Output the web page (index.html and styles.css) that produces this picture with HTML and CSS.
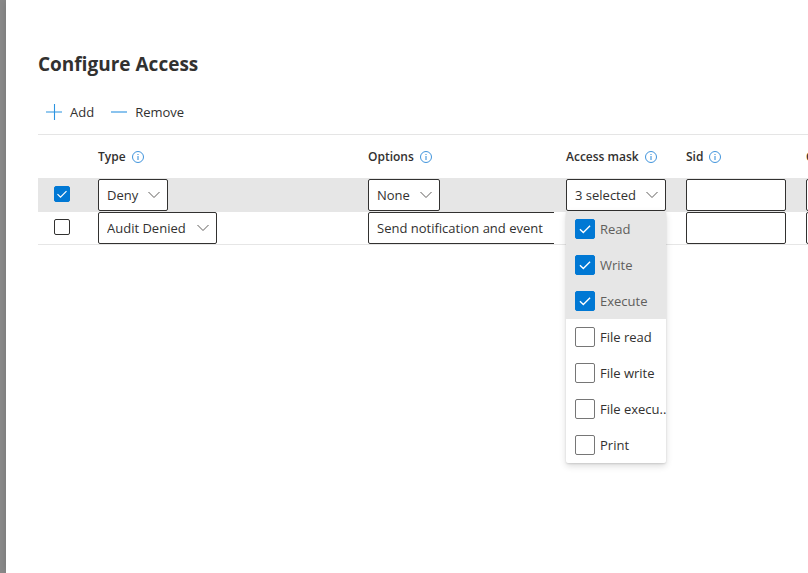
FILE: index.html
```html
<!DOCTYPE html>
<html lang="en">
<head>
    <meta charset="UTF-8">
    <meta name="viewport" content="width=device-width, initial-scale=1.0">
    <title>Configure Access</title>
    <link rel="stylesheet" href="styles.css">
</head>
<body>
    <svg class="symbols" aria-hidden="true">
        <symbol id="chevron" viewBox="0 0 12 12">
            <path d="M0.5 3 L6 8.5 L11.5 3" fill="none" stroke="currentColor" stroke-width="1"/>
        </symbol>
        <symbol id="info" viewBox="0 0 12 12">
            <circle cx="6" cy="6" r="5.5" fill="none" stroke="currentColor" stroke-width="0.9"/>
            <path d="M6 5 V9 M6 3 V4" fill="none" stroke="currentColor" stroke-width="1"/>
        </symbol>
        <symbol id="check" viewBox="0 0 16 16">
            <path d="M3.5 8.2 L6.5 11.2 L12.5 5.2" fill="none" stroke="currentColor" stroke-width="1.2"/>
        </symbol>
    </svg>

    <main class="panel">
        <h1>Configure Access</h1>

        <div class="toolbar">
            <button class="command">
                <svg class="command-icon" viewBox="0 0 16 16"><path d="M0 8 H16 M8.5 0 V16"/></svg>
                Add
            </button>
            <button class="command">
                <svg class="command-icon" viewBox="0 0 16 16"><path d="M0 8 H16"/></svg>
                Remove
            </button>
        </div>

        <table class="grid">
            <colgroup>
                <col class="col-check">
                <col class="col-type">
                <col class="col-options">
                <col class="col-field">
                <col class="col-field">
                <col class="col-field">
            </colgroup>
            <thead>
                <tr>
                    <td></td>
                    <th scope="col"><span class="heading">Type <svg class="info"><use href="#info"/></svg></span></th>
                    <th scope="col"><span class="heading">Options <svg class="info"><use href="#info"/></svg></span></th>
                    <th scope="col"><span class="heading">Access mask <svg class="info"><use href="#info"/></svg></span></th>
                    <th scope="col"><span class="heading">Sid <svg class="info"><use href="#info"/></svg></span></th>
                    <th scope="col"><span class="heading">Computer Sid <svg class="info"><use href="#info"/></svg></span></th>
                </tr>
            </thead>
            <tbody>
                <tr class="selected">
                    <td class="check-cell">
                        <label class="tick">
                            <input type="checkbox" aria-label="Select row 1" checked>
                            <svg><use href="#check"/></svg>
                        </label>
                    </td>
                    <td>
                        <div class="dropdown dropdown-short">
                            <select aria-label="Type">
                                <option>Deny</option>
                            </select>
                            <svg class="chevron"><use href="#chevron"/></svg>
                        </div>
                    </td>
                    <td>
                        <div class="dropdown dropdown-none">
                            <select aria-label="Options">
                                <option>None</option>
                            </select>
                            <svg class="chevron"><use href="#chevron"/></svg>
                        </div>
                    </td>
                    <td>
                        <div class="dropdown dropdown-mask">
                            <button class="mask-button" aria-expanded="true">3 selected</button>
                            <svg class="chevron"><use href="#chevron"/></svg>
                            <div class="menu">
                                <label class="menu-item checked">
                                    <span class="tick large"><input type="checkbox" checked><svg><use href="#check"/></svg></span>
                                    <span class="menu-text">Read</span>
                                </label>
                                <label class="menu-item checked">
                                    <span class="tick large"><input type="checkbox" checked><svg><use href="#check"/></svg></span>
                                    <span class="menu-text">Write</span>
                                </label>
                                <label class="menu-item checked">
                                    <span class="tick large"><input type="checkbox" checked><svg><use href="#check"/></svg></span>
                                    <span class="menu-text">Execute</span>
                                </label>
                                <label class="menu-item">
                                    <span class="tick large"><input type="checkbox"></span>
                                    <span class="menu-text">File read</span>
                                </label>
                                <label class="menu-item">
                                    <span class="tick large"><input type="checkbox"></span>
                                    <span class="menu-text">File write</span>
                                </label>
                                <label class="menu-item">
                                    <span class="tick large"><input type="checkbox"></span>
                                    <span class="menu-text">File execu..</span>
                                </label>
                                <label class="menu-item">
                                    <span class="tick large"><input type="checkbox"></span>
                                    <span class="menu-text">Print</span>
                                </label>
                            </div>
                        </div>
                    </td>
                    <td><input class="field" type="text" aria-label="Sid"></td>
                    <td><input class="field" type="text" aria-label="Computer Sid"></td>
                </tr>
                <tr>
                    <td class="check-cell">
                        <label class="tick"><input type="checkbox" aria-label="Select row 2"></label>
                    </td>
                    <td>
                        <div class="dropdown dropdown-medium">
                            <select aria-label="Type">
                                <option>Audit Denied</option>
                            </select>
                            <svg class="chevron"><use href="#chevron"/></svg>
                        </div>
                    </td>
                    <td>
                        <div class="clip">
                            <div class="dropdown dropdown-long">
                                <select aria-label="Options">
                                    <option>Send notification and event</option>
                                </select>
                                <svg class="chevron"><use href="#chevron"/></svg>
                            </div>
                        </div>
                    </td>
                    <td></td>
                    <td><input class="field" type="text" aria-label="Sid"></td>
                    <td><input class="field" type="text" aria-label="Computer Sid"></td>
                </tr>
            </tbody>
        </table>
    </main>
</body>
</html>
```
FILE: styles.css
```css
* {
    box-sizing: border-box;
}
body {
    margin: 0;
    padding-left: 6px;
    min-height: 100vh;
    display: flex;
    overflow: hidden;
    background-color: #8a8a8a;
    font-family: "Open Sans", "Noto Sans", sans-serif;
    font-size: 13px;
    line-height: 20px;
    color: #323130;
}
.symbols {
    display: none;
}
.panel {
    flex: 1;
    min-width: 0;
    padding: 50px 0 0 32px;
    background-color: #fff;
    box-shadow: 0 0 8px rgba(0, 0, 0, 0.15);
}
h1 {
    margin: 0;
    font-size: 19px;
    line-height: 28px;
    font-weight: 700;
}
button, select, input {
    font: inherit;
    color: inherit;
}
.toolbar {
    display: flex;
    gap: 17px;
    margin-top: 12px;
    padding-left: 8px;
    height: 45px;
    border-bottom: 1px solid #e5e5e5;
}
.command {
    display: flex;
    align-items: center;
    gap: 8px;
    padding: 0;
    border: none;
    background: none;
    cursor: pointer;
}
.command-icon {
    width: 16px;
    height: 16px;
    fill: none;
    stroke: #2b93e0;
    stroke-width: 1.1;
}
.grid {
    table-layout: fixed;
    width: 100%;
    min-width: 888px;
    border-collapse: separate;
    border-spacing: 0;
}
.col-check {
    width: 60px;
}
.col-type {
    width: 270px;
}
.col-options {
    width: 198px;
}
.col-field {
    width: 120px;
}
th, td {
    padding: 0;
    text-align: left;
    border-bottom: 1px solid #e6e6e6;
}
thead th, thead td {
    height: 44px;
}
th {
    font-size: 12px;
    font-weight: 600;
    white-space: nowrap;
}
tbody td {
    height: 33px;
}
.check-cell {
    padding-bottom: 2px;
}
.selected td {
    background-color: #e6e6e6;
}
.heading {
    display: flex;
    align-items: center;
    gap: 6px;
}
.info {
    width: 12px;
    height: 12px;
    color: #2b88d8;
}
.tick {
    display: block;
    position: relative;
    width: 16px;
    height: 16px;
    margin-left: 16px;
}
.tick input {
    display: block;
    appearance: none;
    width: 100%;
    height: 100%;
    margin: 0;
    border: 1px solid #323130;
    border-radius: 2px;
    background-color: #fff;
}
.tick input:checked {
    border-color: #0078d4;
    background-color: #0078d4;
}
.tick svg {
    position: absolute;
    inset: 0;
    width: 100%;
    height: 100%;
    color: #fff;
    pointer-events: none;
}
.tick.large {
    flex: none;
    width: 20px;
    height: 20px;
    margin-left: 0;
}
.large input {
    border-color: #767676;
}
.large svg {
    padding: 1px;
}
.dropdown {
    position: relative;
    height: 32px;
}
.dropdown-short {
    width: 70px;
}
.dropdown-none {
    width: 72px;
}
.dropdown-medium {
    width: 119px;
}
.dropdown-mask {
    width: 100px;
}
.dropdown-long {
    width: 208px;
}
.clip {
    margin-right: 12px;
    overflow: hidden;
}
select, .mask-button, .field {
    display: block;
    appearance: none;
    width: 100%;
    height: 32px;
    padding: 0 8px;
    border: 1px solid #323130;
    border-radius: 2px;
    background-color: #fff;
    text-align: left;
}
.field {
    width: 100px;
}
.chevron {
    position: absolute;
    top: 10px;
    right: 8px;
    width: 12px;
    height: 12px;
    color: #605e5c;
    pointer-events: none;
}
.menu {
    position: absolute;
    top: 100%;
    left: 0;
    z-index: 1;
    width: 100%;
    overflow: hidden;
    border-radius: 0 0 2px 2px;
    background-color: #fff;
    box-shadow: 0 3px 7px rgba(0, 0, 0, 0.14), 0 1px 2px rgba(0, 0, 0, 0.12);
}
.menu-item {
    display: flex;
    align-items: center;
    gap: 5px;
    height: 36px;
    padding-left: 9px;
    white-space: nowrap;
}
.menu-item.checked {
    background-color: #e6e6e6;
    color: #605e5c;
}
```
